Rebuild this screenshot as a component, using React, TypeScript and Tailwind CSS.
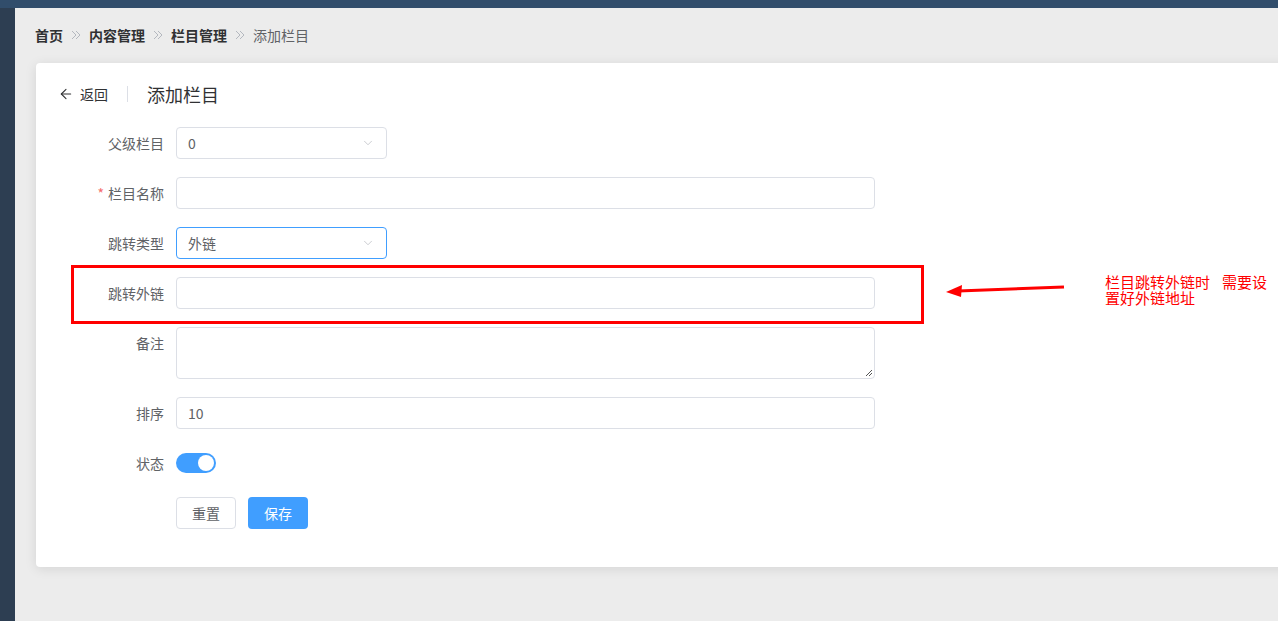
import { ArrowLeft, ChevronDown } from 'lucide-react';

const font = { fontFamily: '"Noto Sans CJK SC", "Noto Sans", sans-serif' };

function Crumbs() {
  const Sep = () => (
    <svg width="10" height="10" viewBox="0 0 10 10" className="mx-2 text-[#b4b8bf]">
      <path d="M1 1l4 4-4 4M5 1l4 4-4 4" fill="none" stroke="currentColor" strokeWidth="1" />
    </svg>
  );
  return (
    <div className="flex items-center h-[20px] text-[14px] leading-[20px]">
      <span className="font-bold text-[#303133]">首页</span>
      <Sep />
      <span className="font-bold text-[#303133]">内容管理</span>
      <Sep />
      <span className="font-bold text-[#303133]">栏目管理</span>
      <Sep />
      <span className="text-[#606266]">添加栏目</span>
    </div>
  );
}

function Row({ label, required, children, tall }: { label: string; required?: boolean; children: React.ReactNode; tall?: boolean }) {
  return (
    <div className={`flex min-h-[32px] ${tall ? 'items-start' : 'items-center'} mb-[18px]`}>
      <div className={`w-[140px] shrink-0 pr-3 text-right text-[14px] text-[#606266] ${tall ? 'pt-[6px]' : ''}`}>
        {required && <span className="text-[#f56c6c] mr-1">*</span>}
        {label}
      </div>
      {children}
    </div>
  );
}

function Select({ value, active }: { value: string; active?: boolean }) {
  return (
    <div
      className={`w-[211px] h-[32px] rounded-[4px] border ${active ? 'border-[#409eff]' : 'border-[#dcdfe6]'} flex items-center justify-between px-[11px] text-[14px] text-[#606266] bg-white`}
    >
      <span>{value}</span>
      <ChevronDown className="w-[14px] h-[14px] text-[#b4b8bf]" strokeWidth={1.2} />
    </div>
  );
}

function Input({ value }: { value?: string }) {
  return (
    <div className="w-[699px] h-[32px] rounded-[4px] border border-[#dcdfe6] flex items-center px-[11px] text-[14px] text-[#606266] bg-white">
      {value}
    </div>
  );
}

export default function App() {
  return (
    <div className="w-[1278px] h-[621px] overflow-hidden bg-[#ececec] flex flex-col" style={font}>
      <div className="h-[8px] bg-[#314d6b] shrink-0" />
      <div className="flex flex-1">
        <div className="w-[15px] bg-[#2d3e52] shrink-0" />
        <div className="flex-1 pl-[20px] pt-[17px] overflow-hidden">
          <Crumbs />
          <div className="relative ml-[1px] mt-[18px] w-[1270px] h-[504px] bg-white rounded-[4px] shadow-[0_2px_12px_0_rgba(0,0,0,0.1)]">
            {/* header */}
            <div className="flex items-center h-[24px] pl-[22px] pt-[19px] box-content">
              <ArrowLeft className="w-[16px] h-[16px] text-[#303133]" strokeWidth={1.6} />
              <span className="ml-[6px] text-[14px] text-[#303133]">返回</span>
              <span className="mx-[19px] w-px h-[16px] bg-[#dcdfe6]" />
              <span className="text-[18px] text-[#303133]">添加栏目</span>
            </div>

            <div className="mt-[21px]">
              <Row label="父级栏目">
                <Select value="0" />
              </Row>
              <Row label="栏目名称" required>
                <Input />
              </Row>
              <Row label="跳转类型">
                <Select value="外链" active />
              </Row>
              <Row label="跳转外链">
                <Input />
              </Row>
              <Row label="备注" tall>
                <div className="relative w-[699px] h-[52px] rounded-[4px] border border-[#dcdfe6] bg-white">
                  <svg width="8" height="8" viewBox="0 0 8 8" className="absolute right-[1px] bottom-[1px] text-[#555]">
                    <path d="M7 1L1 7M7 4L4 7" stroke="currentColor" strokeWidth="1" />
                  </svg>
                </div>
              </Row>
              <Row label="排序">
                <Input value="10" />
              </Row>
              <Row label="状态">
                <div className="w-[40px] h-[20px] rounded-full bg-[#409eff] flex items-center justify-end pr-[2px]">
                  <div className="w-[16px] h-[16px] rounded-full bg-white" />
                </div>
              </Row>
              <div className="flex pl-[140px] gap-3">
                <button className="w-[60px] h-[32px] rounded-[4px] border border-[#dcdfe6] text-[14px] text-[#606266] bg-white">重置</button>
                <button className="w-[60px] h-[32px] rounded-[4px] bg-[#409eff] text-[14px] text-white">保存</button>
              </div>
            </div>

            {/* annotation: red box */}
            <div className="absolute left-[35px] top-[202px] w-[853px] h-[59px] border-[3px] border-[#ff0000]" />
          </div>
        </div>
      </div>

      {/* annotation: arrow + note */}
      <svg width="130" height="20" viewBox="0 0 130 20" className="absolute left-[940px] top-[280px]">
        <path d="M124 7L18 11" stroke="#ff0000" strokeWidth="3" />
        <path d="M6 12L22 5L21 17Z" fill="#ff0000" />
      </svg>
      <div className="absolute left-[1105px] top-[274px] text-[15px] leading-[16px] text-[#ff0000]">
        <div>
          栏目跳转外链时<span className="ml-3">需要设</span>
        </div>
        <div>置好外链地址</div>
      </div>
    </div>
  );
}
